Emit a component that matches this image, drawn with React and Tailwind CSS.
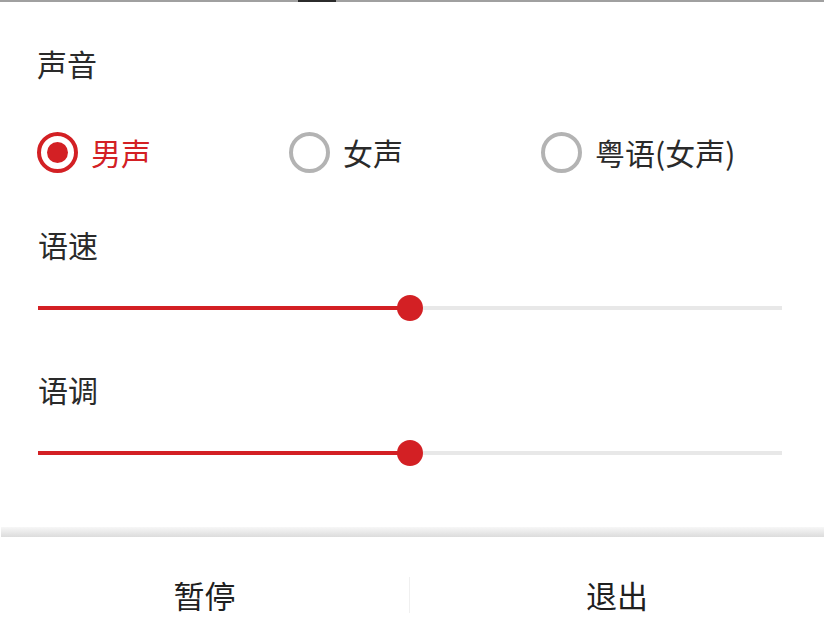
const font = { fontFamily: '"Noto Sans CJK SC", "Noto Sans", sans-serif' }

const Radio = ({ label, checked }) => (
  <div className="flex items-center w-[252px] shrink-0">
    {checked ? (
      <span className="w-[41px] h-[41px] rounded-full border-[4px] border-[#d32024] flex items-center justify-center">
        <span className="w-[21px] h-[21px] rounded-full bg-[#d32024]" />
      </span>
    ) : (
      <span className="w-[41px] h-[41px] rounded-full border-[4px] border-[#b3b3b3]" />
    )}
    <span
      className={`ml-[13px] text-[30px] leading-[40px] ${checked ? 'text-[#d32024]' : 'text-[#2a2a2a]'}`}
    >
      {label}
    </span>
  </div>
)

const Slider = ({ value }) => (
  <div className="relative h-[26px] flex items-center">
    <div className="w-full h-[4px] bg-[#e8e8e8] flex">
      <div className="h-full bg-[#d32024]" style={{ width: `${value}%` }} />
    </div>
    <span
      className="absolute top-0 w-[26px] h-[26px] -ml-[13px] rounded-full bg-[#d32024]"
      style={{ left: `${value}%` }}
    />
  </div>
)

export default function App() {
  return (
    <div className="w-[824px] h-[635px] bg-white flex flex-col overflow-hidden" style={font}>
      {/* top edge */}
      <div className="h-[2px] bg-[#a0a0a0] flex">
        <div className="ml-[298px] w-[38px] h-full bg-[#2b2b2b]" />
      </div>

      <div className="pl-[37px] pr-[42px] flex flex-col">
        <h2 className="mt-[43px] text-[30px] leading-[36px] text-[#2a2a2a]">声音</h2>

        <div className="mt-[49px] flex items-center h-[44px]">
          <Radio label="男声" checked />
          <Radio label="女声" />
          <Radio label="粤语(女声)" />
        </div>

        <h2 className="mt-[52px] ml-[1px] text-[30px] leading-[36px] text-[#2a2a2a]">语速</h2>
        <div className="mt-[33px] ml-[1px]">
          <Slider value={50} />
        </div>

        <h2 className="mt-[50px] ml-[1px] text-[30px] leading-[36px] text-[#2a2a2a]">语调</h2>
        <div className="mt-[33px] ml-[1px]">
          <Slider value={50} />
        </div>
      </div>

      {/* bottom bar */}
      <div className="mt-[61px] ml-[1px] h-[10px] bg-gradient-to-b from-[#f7f7f7] to-[#dcdcdc]" />
      <div className="flex-1 flex items-center pt-[17px]">
        <button className="w-[409px] text-[31px] leading-[40px] text-[#1f1f1f]">暂停</button>
        <div className="w-[1px] h-[36px] bg-[#f0f0f0]" />
        <button className="flex-1 text-[31px] leading-[40px] text-[#1f1f1f]">退出</button>
      </div>
    </div>
  )
}
